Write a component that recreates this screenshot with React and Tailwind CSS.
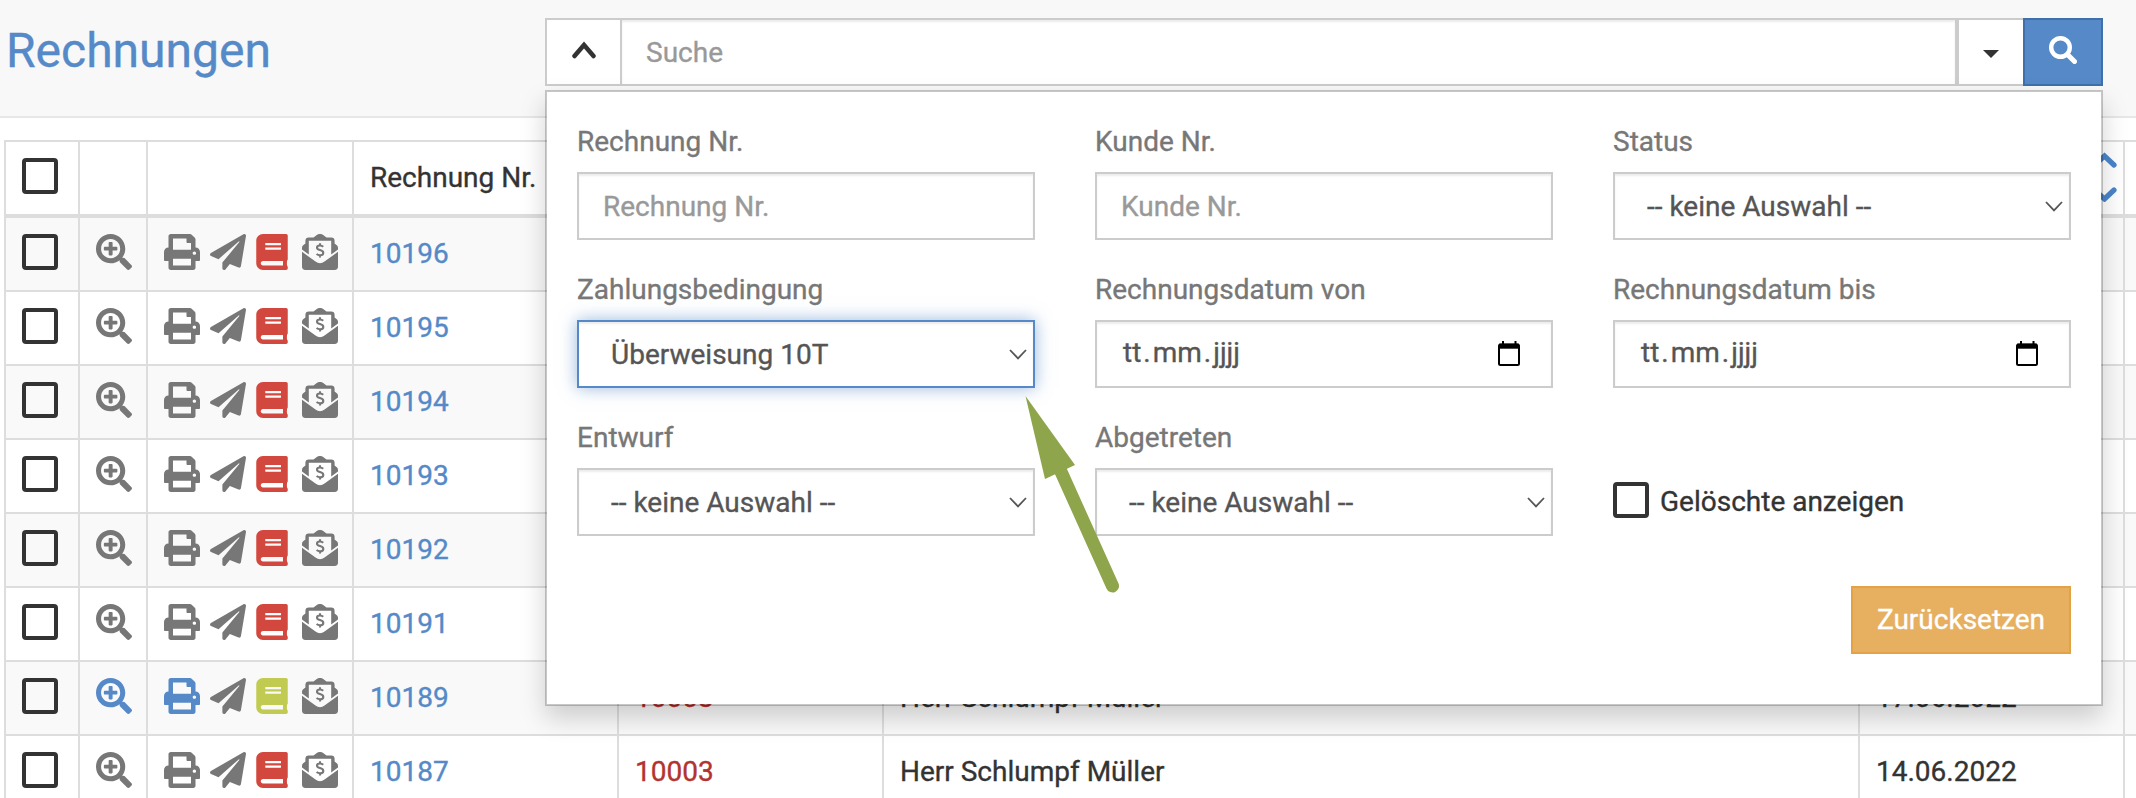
import { FaSearchPlus, FaPrint, FaPaperPlane, FaBook } from "react-icons/fa";

const ROWS = [
  { nr: "10196" },
  { nr: "10195" },
  { nr: "10194" },
  { nr: "10193" },
  { nr: "10192" },
  { nr: "10191" },
  { nr: "10189", kunde: "10003", name: "Herr Schlumpf Müller", datum: "17.06.2022", active: true },
  { nr: "10187", kunde: "10003", name: "Herr Schlumpf Müller", datum: "14.06.2022" },
];

const GRID =
  "grid h-full grid-cols-[72px_66px_204px_263px_263px_974px_263px_11px] gap-x-[2px] [&>div]:flex [&>div]:items-center";

function Box({ className = "" }) {
  return <span className={"block size-9 shrink-0 rounded-[4px] border-4 border-[#333] " + className} />;
}

function EnvelopeDollar({ className }) {
  return (
    <svg viewBox="0 0 36 36" className={className} fill="currentColor">
      <path d="M0 17.800 L13.500 27.600 C16.500 29.700 19.500 29.700 22.500 27.600 L36 17.800 V32.600 A3.400 3.400 0 0 1 32.600 36 H3.400 A3.400 3.400 0 0 1 0 32.600 Z" />
      <path d="M0 15.600 V14 C0 12.800 .6 11.700 1.500 11 L3.400 9.500 V6.800 A3.400 3.400 0 0 1 6.800 3.400 H11.500 L14.800 1 C17 -.4 19 -.4 21.200 1 L24.500 3.400 H29.200 A3.400 3.400 0 0 1 32.600 6.800 V9.500 L34.500 11 C35.400 11.700 36 12.800 36 14 V15.600 L29.200 20.500 V6.800 H6.800 V20.500 Z" />
      <path
        d="M21.200 12.700 C20.400 11.900 19.300 11.500 18 11.500 C16.200 11.500 15 12.300 15 13.700 C15 16.900 21.300 15.300 21.300 18.900 C21.300 20.400 19.900 21.200 18 21.200 C16.600 21.200 15.400 20.700 14.600 20 M18 9.200 V11.500 M18 21.200 V23.600"
        fill="none"
        stroke="currentColor"
        strokeWidth="2.100"
      />
    </svg>
  );
}

function ChevronDown({ className }) {
  return (
    <svg viewBox="0 0 18 11" className={className} fill="none" stroke="currentColor" strokeWidth="1.8">
      <path d="M1 1 L9 9.4 L17 1" />
    </svg>
  );
}

function Row({ row, odd }) {
  return (
    <div className={"h-[74px] border-b-2 border-[#ddd] " + (odd ? "bg-[#f9f9f9]" : "bg-white")}>
      <div className={GRID + " bg-[#ddd] " + (odd ? "[&>div]:bg-[#f9f9f9]" : "[&>div]:bg-white")}>
        <div className="pb-1 pl-4"><Box /></div>
        <div className={"pb-1 pl-4 " + (row.active ? "text-[#5589c7]" : "text-[#777]")}>
          <FaSearchPlus className="size-9" />
        </div>
        <div className="pb-1 pl-4 text-[#777]">
          <FaPrint className={"size-9 " + (row.active ? "text-[#5589c7]" : "")} />
          <FaPaperPlane className="ml-[10px] size-9" />
          <FaBook className={"ml-2 size-9 " + (row.active ? "text-[#c2cb51]" : "text-[#d2483e]")} />
          <EnvelopeDollar className="ml-3 size-9" />
        </div>
        <div className="pl-4 text-[#5589c7]">{row.nr}</div>
        <div className="pl-4 text-[#b23330]">{row.kunde}</div>
        <div className="pl-4">{row.name}</div>
        <div className="pl-4">{row.datum}</div>
        <div />
      </div>
    </div>
  );
}

function Field({ label, children, focus, className = "" }) {
  return (
    <div className="flex flex-col">
      <div className="h-12 leading-[35px] text-[#777]">{label}</div>
      <div
        className={
          "flex h-[68px] items-center border-2 bg-white text-[#555] " +
          (focus
            ? "border-[#5589c7] shadow-[inset_0_2px_2px_rgba(0,0,0,0.075),0_0_16px_rgba(85,137,199,0.6)] "
            : "border-[#ccc] shadow-[inset_0_2px_2px_rgba(0,0,0,0.075)] ") +
          className
        }
      >
        {children}
      </div>
    </div>
  );
}

function SelectField({ label, value, focus }) {
  return (
    <Field label={label} focus={focus} className="justify-between pr-[6px] pl-8">
      <span className="pt-0.5">{value}</span>
      <ChevronDown className="h-[11px] w-[18px]" />
    </Field>
  );
}

function TextField({ label }) {
  return (
    <Field label={label} className="pt-px pl-6">
      <span className="text-[#999]">{label}</span>
    </Field>
  );
}

function DateField({ label }) {
  return (
    <Field label={label} className="justify-between pr-[31px] pb-0.5 pl-[26px]">
      <span className="flex">
        <span>tt</span><span className="ml-[2px]">.</span><span className="ml-[2px]">mm</span><span className="ml-[2px]">.</span><span className="ml-[2px]">jjjj</span>
      </span>
      <svg viewBox="0 0 22 25" className="h-[25px] w-[22px] text-black" fill="none" stroke="currentColor">
        <rect x="1" y="3.500" width="20" height="20.500" rx="1.500" strokeWidth="2" />
        <path d="M1 5.200H21" strokeWidth="5" />
        <path d="M5 0V4M17.500 0V4" strokeWidth="2" />
      </svg>
    </Field>
  );
}

export default function App() {
  return (
    <div className="relative h-[798px] w-[2136px] overflow-hidden bg-white font-['Roboto',sans-serif] text-[28px] leading-10 text-[#333] [-webkit-text-stroke:0.35px]">
      <header className="flex h-[118px] border-b-2 border-[#e7e7e7] bg-[#f8f8f8] pt-[18px]">
        <h1 className="w-[545px] pl-[6px] text-[48px] leading-[66px] text-[#5589c7]">Rechnungen</h1>
        <div className="flex h-[68px] w-[1558px]">
          <div className="flex w-[77px] items-center justify-center border-2 border-[#ccc] bg-white">
            <svg viewBox="0 0 24 18" className="mb-1 h-[18px] w-6" fill="none" stroke="currentColor" strokeWidth="4.500" strokeLinecap="round">
              <path d="M2.500 15L12 4L21.500 15" />
            </svg>
          </div>
          <div className="flex flex-1 items-center border-y-2 border-r-2 border-[#ccc] bg-white pt-px pl-6 text-[#999] shadow-[inset_0_2px_2px_rgba(0,0,0,0.075)]">
            Suche
          </div>
          <div className="flex w-[66px] items-center justify-center border-y-2 border-l-2 border-[#ccc] bg-white">
            <svg viewBox="0 0 16 8" className="mt-[3px] h-2 w-4" fill="currentColor"><path d="M0 0H16L8 8Z" /></svg>
          </div>
          <div className="flex w-20 items-center justify-center border-2 border-[#3f70aa] bg-[#5589c7] text-white">
            <svg viewBox="0 0 28 28" className="mb-1 size-7" fill="none" stroke="currentColor">
              <circle cx="11.500" cy="11.500" r="9.300" strokeWidth="4.400" />
              <path d="M18.500 18.500L25.500 25.500" strokeWidth="5" strokeLinecap="round" />
            </svg>
          </div>
        </div>
      </header>

      <main className="mt-[22px] ml-1 w-[2132px] border-t-2 border-l-2 border-[#ddd]">
        <div className="h-[76px] border-b-4 border-[#ddd]">
          <div className={GRID + " bg-[#ddd] [&>div]:bg-white"}>
            <div className="pb-1 pl-4"><Box /></div>
            <div />
            <div />
            <div className="pl-4">Rechnung Nr.</div>
            <div />
            <div />
            <div className="justify-end pb-0.5 pr-[6px]">
              <svg viewBox="0 0 26 50" className="h-[50px] w-[26px] text-[#4a86cb]" fill="none" stroke="currentColor" strokeWidth="5.200" strokeLinecap="round">
                <path d="M3.500 13L13.500 4L23 13M3.500 38L13.500 47L23 38" />
              </svg>
            </div>
            <div />
          </div>
        </div>
        {ROWS.map((row, i) => (
          <Row key={row.nr} row={row} odd={i % 2 === 0} />
        ))}
      </main>

      <section className="absolute top-[90px] left-[545px] h-[616px] w-[1558px] border-2 border-black/20 bg-white bg-clip-padding px-[30px] pt-8 shadow-[0_12px_24px_rgba(0,0,0,0.175)]">
        <div className="grid grid-cols-3 gap-x-[60px] gap-y-8">
          <TextField label="Rechnung Nr." />
          <TextField label="Kunde Nr." />
          <SelectField label="Status" value="-- keine Auswahl --" />
          <SelectField label="Zahlungsbedingung" value="Überweisung 10T" focus />
          <DateField label="Rechnungsdatum von" />
          <DateField label="Rechnungsdatum bis" />
          <SelectField label="Entwurf" value="-- keine Auswahl --" />
          <SelectField label="Abgetreten" value="-- keine Auswahl --" />
          <div className="flex items-center gap-[11px] pt-[46px]">
            <Box className="mb-0.5" />
            <span className="pt-0.5">Gelöschte anzeigen</span>
          </div>
        </div>
        <div className="mt-[50px] flex justify-end">
          <div className="flex h-[68px] w-[220px] items-center justify-center border-2 border-[#e3a245] bg-[#e6b060] text-white">
            Zurücksetzen
          </div>
        </div>
      </section>

      <svg viewBox="0 0 100 206" className="absolute top-[390px] left-[1020px] h-[206px] w-[100px]">
        <path d="M5.500 6L55 75L25 89Z" fill="#8fa54b" />
        <path d="M38 75L92.500 196" stroke="#8fa54b" strokeWidth="13" strokeLinecap="round" />
      </svg>
    </div>
  );
}
